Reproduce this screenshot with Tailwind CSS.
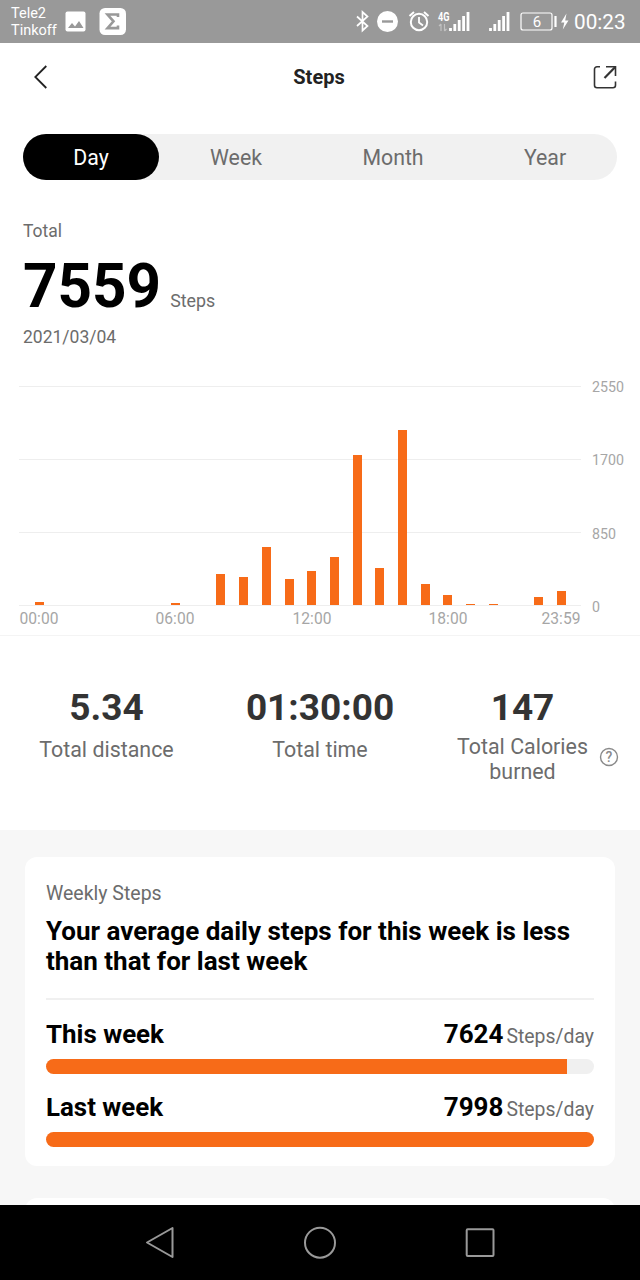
<!DOCTYPE html>
<html lang="en">
<head>
  <meta charset="UTF-8" />
  <meta name="viewport" content="width=device-width, initial-scale=1.0" />
  <title>Steps</title>
  <script src="https://cdn.jsdelivr.net/npm/@tailwindcss/browser@4"></script>
</head>
<body class="w-[640px] h-[1280px] overflow-hidden flex flex-col bg-white text-[#6c6c6c] font-[Roboto,sans-serif]">

<!-- Status bar -->
<div class="h-[43px] shrink-0 bg-[#999999] text-white flex justify-between">
  <div class="flex pl-[11px]">
    <div class="w-[54px] pt-[5px] text-[14.5px] leading-[17px]">Tele2<br>Tinkoff</div>
    <svg class="mt-[11px] w-[21px] h-[21px]" viewBox="0 0 21 21">
      <rect x="0.5" y="0.5" width="20" height="20" rx="2" fill="#fff"/>
      <path d="M3 17l4-5 3 3.500 4-5.500 4.500 7z" fill="#999"/>
    </svg>
    <svg class="mt-[8px] ml-[13px] w-[28px] h-[28px]" viewBox="0 0 28 28">
      <rect x="0.500" y="0" width="26.500" height="27" rx="5.500" fill="#fff"/>
      <path d="M19 9V6.500H8.500l6 6.800-6 6.800H19v-2.500" fill="none" stroke="#999" stroke-width="2.600"/>
    </svg>
  </div>
  <div class="flex pr-[14px]">
    <svg class="w-[220px] h-[43px]" viewBox="355 0 220 43" fill="none" stroke="#fff">
      <path d="M357 16.500l10.500 9.500-5 4.500V12l5 4.500L357 26" stroke-width="1.700"/>
      <circle cx="387.500" cy="21.500" r="10.500" fill="#fff" stroke="none"/>
      <path d="M382 21.500h11" stroke="#999" stroke-width="2.400"/>
      <circle cx="419" cy="22" r="8.200" stroke-width="2"/>
      <path d="M419 17v5.500l4 3" stroke-width="1.800"/>
      <path d="M409.500 16l4.500-4M428.500 16l-4.500-4" stroke-width="2"/>
      <text x="438" y="20.500" font-size="12" font-weight="700" textLength="11.500" lengthAdjust="spacingAndGlyphs" fill="#fff" stroke="none">4G</text>
      <path d="M441 24v7m-2-5l2-2M444.500 24v7m2-2l-2 2" stroke-width="1.200" opacity="0.400"/>
      <path d="M450.500 28v3M454.800 24v7M459.200 20v11M463.600 16v15M468 12v19" stroke-width="2.800"/>
      <path d="M490.500 28v3M494.800 24v7M499.200 20v11M503.600 16v15M508 12v19" stroke-width="2.800"/>
      <rect x="521" y="13" width="31" height="17" rx="2" stroke-width="1.200"/>
      <text x="537" y="27" font-size="15" text-anchor="middle" fill="#fff" stroke="none">6</text>
      <path d="M555.500 16v11" stroke-width="2.200"/>
      <path d="M566.500 13.500l-5.500 9h3.300l-1.500 7 5.700-9h-3.300z" fill="#fff" stroke="none"/>
    </svg>
    <span class="text-[20.7px] leading-[44px] w-[52px] -ml-px">00:23</span>
  </div>
</div>

<!-- Header -->
<header class="h-[69px] shrink-0 flex justify-between items-start pt-[16px] px-[23px] text-[#222222]">
  <svg class="w-[36px] h-[36px]" viewBox="0 0 36 36" fill="none" stroke="#222" stroke-width="1.800">
    <path d="M23.300 7L12.300 18l11 11"/>
  </svg>
  <h1 class="text-[20px] leading-[37px] font-bold -ml-[14px]">Steps</h1>
  <svg class="mt-[6px] w-[24px] h-[24px]" viewBox="0 0 24 24" fill="none" stroke="#333" stroke-width="1.600">
    <path d="M7 1.800H4a2.500 2.500 0 0 0-2.500 2.500v16A2.500 2.500 0 0 0 4 22.800h16a2.500 2.500 0 0 0 2.500-2.500V16.500M13 1.800h9.500V11"/>
    <path d="M11.500 13L22 2.300" stroke-width="2.200"/>
  </svg>
</header>

<!-- Range tabs -->
<nav class="mt-[22px] ml-[23px] w-[594px] h-[46px] shrink-0 flex rounded-full bg-[#f1f1f1] text-[21.3px] leading-[48px] text-center">
  <a class="w-[136px] rounded-full bg-black text-white">Day</a>
  <a class="w-[154px]">Week</a>
  <a class="w-[160px]">Month</a>
  <a class="w-[144px]">Year</a>
</nav>

<!-- Total -->
<section class="h-[206px] shrink-0 pl-[23px] pt-[41px] text-[17.5px]">
  <p class="leading-[21px]">Total</p>
  <p class="flex items-baseline gap-[9px] h-[75px] leading-[90px]">
    <strong class="text-[60.2px] text-black">7559</strong>
    <span class="text-[17.8px]">Steps</span>
  </p>
  <p class="leading-[40px]">2021/03/04</p>
</section>

<!-- Hourly chart -->
<section class="h-[250px] shrink-0 pl-[19px] border-b border-[#f4f4f4] text-[#a6a6a6]">
  <div class="flex">
    <div class="relative w-[562px] h-[220px]">
      <div class="h-full flex flex-col justify-between">
        <i class="h-px bg-[#eeeeee]"></i>
        <i class="h-px bg-[#eeeeee]"></i>
        <i class="h-px bg-[#eeeeee]"></i>
        <i class="h-px bg-[#eeeeee]"></i>
      </div>
      <div id="bars" class="absolute inset-0 pl-[15.8px] pr-[14.7px] pb-[0.6px] flex justify-between items-end"></div>
    </div>
    <div class="h-[234px] -mt-[6px] pl-[11px] flex flex-col justify-between text-[14.2px] leading-[14px]">
      <span>2550</span><span>1700</span><span>850</span><span>0</span>
    </div>
  </div>
  <div class="w-[562px] -mt-[4px] flex justify-between text-[15.6px] leading-[18px]">
    <span class="w-[40px] text-center">00:00</span>
    <span class="w-[40px] text-center ml-[96px]">06:00</span>
    <span class="w-[40px] text-center ml-[97px]">12:00</span>
    <span class="w-[40px] text-center ml-[96px]">18:00</span>
    <span class="w-[40px] text-center ml-[73px]">23:59</span>
  </div>
</section>

<!-- Summary -->
<section class="h-[194px] shrink-0 pt-[51px] flex text-center text-[21.4px] leading-[25px]">
  <div class="w-[213px]">
    <p class="text-[37px] leading-[42px] font-bold text-[#333333]">5.34</p>
    <p class="mt-[8px]">Total distance</p>
  </div>
  <div class="w-[214px]">
    <p class="text-[37px] leading-[42px] font-bold text-[#333333]">01:30:00</p>
    <p class="mt-[8px]">Total time</p>
  </div>
  <div class="w-[191px]">
    <p class="text-[37px] leading-[42px] font-bold text-[#333333]">147</p>
    <p class="mt-[5px] px-[25px]">Total Calories burned</p>
  </div>
  <svg class="mt-[60px] -ml-[19px] w-[20px] h-[20px]" viewBox="0 0 20 20">
    <circle cx="10" cy="10" r="8.500" fill="none" stroke="#8a8a8a" stroke-width="1.400"/>
    <text x="10" y="14.800" font-size="14" font-weight="500" text-anchor="middle" fill="#8a8a8a">?</text>
  </svg>
</section>

<!-- Weekly card -->
<main class="h-[375px] shrink-0 overflow-hidden bg-[#f7f7f7] px-[25px] pt-[27px]">
  <div class="h-[309px] rounded-xl bg-white px-[21px] pt-[26px]">
    <p class="text-[19.5px] leading-[22px]">Weekly Steps</p>
    <h2 class="mt-[11px] text-[26px] leading-[30px] font-bold text-black whitespace-nowrap">Your average daily steps for this week is less<br>than that for last week</h2>
    <hr class="mt-[22px] border-0 h-[2px] bg-[#f0f0f0]">
    <div class="mt-[18px] h-[32px] flex items-baseline leading-[32px]">
      <span class="flex-1 text-[25.9px] font-bold text-black">This week</span>
      <span class="text-[26px] font-bold text-black">7624</span>
      <span class="ml-[3px] text-[19.4px]">Steps/day</span>
    </div>
    <div class="mt-[8.5px] h-[15px] rounded-full overflow-hidden bg-[#f0f0f0]">
      <div class="h-full bg-[#f76b18]" style="width: 95.1%"></div>
    </div>
    <div class="mt-[17.5px] h-[32px] flex items-baseline leading-[32px]">
      <span class="flex-1 text-[25.9px] font-bold text-black">Last week</span>
      <span class="text-[26px] font-bold text-black">7998</span>
      <span class="ml-[3px] text-[19.4px]">Steps/day</span>
    </div>
    <div class="mt-[8.5px] h-[15px] rounded-full overflow-hidden bg-[#f0f0f0]">
      <div class="h-full bg-[#f76b18]" style="width: 100%"></div>
    </div>
  </div>
  <div class="mt-[32px] h-[100px] rounded-xl bg-white"></div>
</main>

<!-- System navigation -->
<footer class="h-[75px] shrink-0 bg-black flex justify-center gap-[124px] pt-[19px]">
  <svg class="w-[36px] h-[36px]" viewBox="0 0 36 36" fill="none" stroke="#999" stroke-width="2" stroke-linejoin="round">
    <path d="M5 18.500L30.500 4v29z"/>
  </svg>
  <svg class="w-[36px] h-[36px]" viewBox="0 0 36 36" fill="none" stroke="#999" stroke-width="2">
    <circle cx="18" cy="18.700" r="15"/>
  </svg>
  <svg class="w-[36px] h-[36px]" viewBox="0 0 36 36" fill="none" stroke="#999" stroke-width="2">
    <rect x="4.700" y="5.200" width="26.800" height="26.800" rx="1"/>
  </svg>
</footer>

<script>
  // bar heights in px, one per hour
  const hours = [3, 0, 0, 0, 0, 0, 2, 0, 31, 28.5, 58, 26, 34.5, 48.5, 150, 37, 175, 21, 10, 1.5, 1.5, 0, 8.5, 14.5];
  document.getElementById('bars').innerHTML = hours
    .map(h => `<div class="w-[9px] bg-[#f76b18]" style="height: ${h}px"></div>`)
    .join('');
</script>

</body>
</html>
